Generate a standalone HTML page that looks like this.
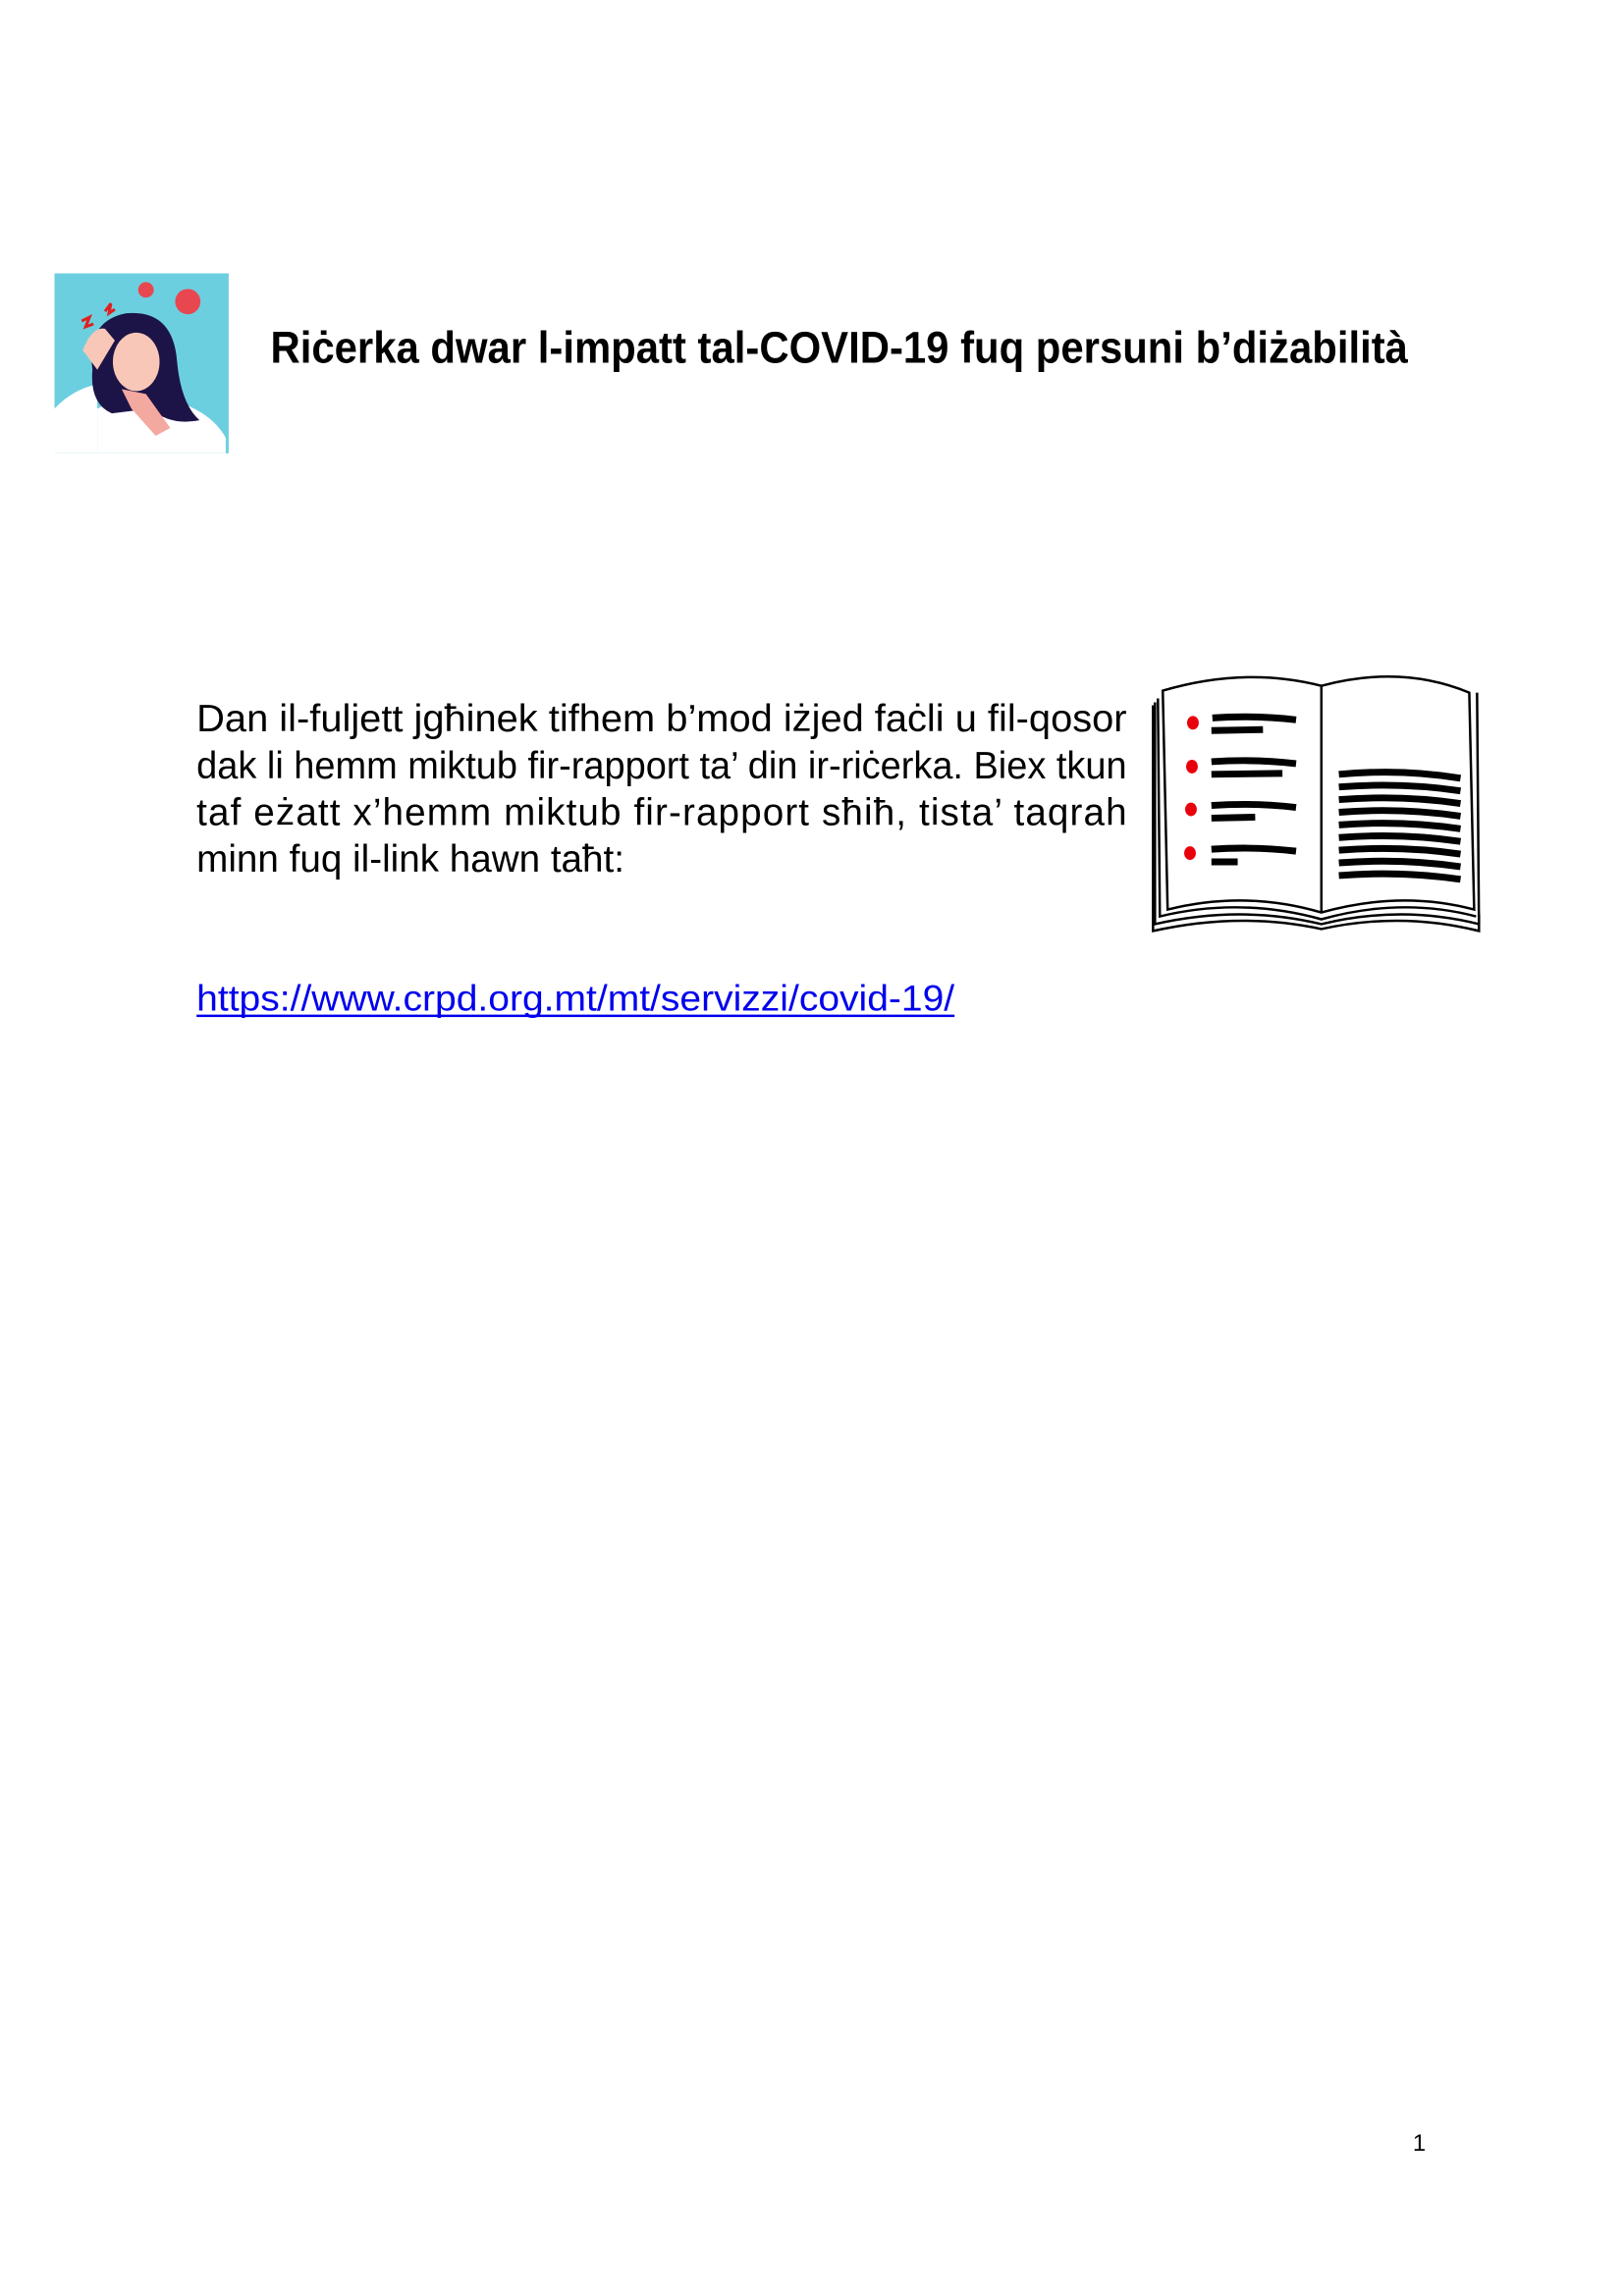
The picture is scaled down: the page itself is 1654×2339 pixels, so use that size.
<!DOCTYPE html>
<html><head><meta charset="utf-8"><style>
html,body{margin:0;padding:0;background:#fff;}
svg{display:block;}
</style></head><body>
<svg width="1654" height="2339" viewBox="0 0 1654 2339" xmlns="http://www.w3.org/2000/svg">
<rect width="1654" height="2339" fill="#fff"/>
<g transform="scale(0.991)">
<!-- illustration -->
<rect x="56" y="281" width="179" height="185" fill="#6ccfe0"/>
<path d="M56 420 Q75 400 100 395 L100 466 L56 466 Z" fill="#fff"/>
<path d="M100 420 Q130 405 170 410 Q215 420 232 450 L232 466 L100 466 Z" fill="#fff"/>
<path d="M95 380 Q88 330 130 322 Q178 318 182 372 Q186 415 205 432 Q175 438 155 420 L115 425 Q92 415 95 380 Z" fill="#1c1446"/>
<ellipse cx="140" cy="372" rx="24" ry="30" fill="#f8c7b8"/>
<path d="M125 400 L150 405 L175 440 L160 448 L135 420 Z" fill="#f4a9a0"/>
<path d="M85 360 Q95 335 108 338 L118 350 L100 380 Z" fill="#f8c7b8"/>
<circle cx="193" cy="310" r="13" fill="#e8474f"/>
<circle cx="150" cy="298" r="8" fill="#e8474f"/>
<path d="M108 320 l6 -8 l-2 10 l6 -4" stroke="#e02020" stroke-width="3" fill="none"/>
<path d="M84 330 l8 -4 l-4 10 l8 -3" stroke="#e02020" stroke-width="3" fill="none"/>
<!-- title -->
<text x="278" y="373" font-family="Liberation Sans, sans-serif" font-weight="bold" font-size="46" textLength="1169" lengthAdjust="spacingAndGlyphs" fill="#000">Riċerka dwar l-impatt tal-COVID-19 fuq persuni b’diżabilità</text>
<!-- paragraph -->
<g font-family="Liberation Sans, sans-serif" font-size="39" fill="#000">
<text x="202" y="752" textLength="956" lengthAdjust="spacingAndGlyphs">Dan il-fuljett jgħinek tifhem b’mod iżjed faċli u fil-qosor</text>
<text x="202" y="800" textLength="956" lengthAdjust="spacingAndGlyphs">dak li hemm miktub fir-rapport ta’ din ir-riċerka. Biex tkun</text>
<text x="202" y="848" textLength="956" lengthAdjust="spacing">taf eżatt x’hemm miktub fir-rapport sħiħ, tista’ taqrah</text>
<text x="202" y="896">minn fuq il-link hawn taħt:</text>
</g>
<text x="202" y="1039" font-family="Liberation Sans, sans-serif" font-size="37.5" fill="#0000ee" textLength="779" lengthAdjust="spacingAndGlyphs">https://www.crpd.org.mt/mt/servizzi/covid-19/</text>
<rect x="202" y="1043" width="779" height="2.5" fill="#0000ee"/>
<!-- book -->
<g fill="none" stroke="#000" stroke-width="2.5">
<path d="M1195 710 Q1280 685 1358 705 Q1440 683 1510 712 L1515 935 Q1440 915 1358 938 Q1280 915 1200 935 Z" fill="#fff"/>
<path d="M1358 705 L1358 938"/>
<path d="M1190 718 L1192 942 Q1275 922 1358 945 Q1440 922 1517 942"/>
<path d="M1187 722 L1187 950 Q1275 930 1358 950 Q1440 930 1520 950 L1520 940"/>
<path d="M1185 725 L1185 957 Q1275 937 1358 955 Q1440 937 1520 957 L1518 712"/>
</g>
<g fill="#e8000b">
<ellipse cx="1226" cy="743" rx="6" ry="7"/>
<ellipse cx="1225" cy="788" rx="6" ry="7"/>
<ellipse cx="1224" cy="832" rx="6" ry="7"/>
<ellipse cx="1223" cy="877" rx="6" ry="7"/>
</g>
<g stroke="#000" stroke-width="7" fill="none">
<path d="M1246 738 Q1290 735 1332 740"/><path d="M1245 751 L1298 750"/>
<path d="M1245 783 Q1290 780 1332 785"/><path d="M1245 796 L1318 795"/>
<path d="M1245 828 Q1290 825 1332 830"/><path d="M1245 841 L1290 840"/>
<path d="M1245 873 Q1290 870 1332 875"/><path d="M1245 886 L1272 886"/>
<path d="M1376 796 Q1440 790 1501 800"/>
<path d="M1376 809 Q1440 804 1501 813"/>
<path d="M1376 822 Q1440 817 1501 826"/>
<path d="M1376 835 Q1440 830 1501 839"/>
<path d="M1376 848 Q1440 843 1501 852"/>
<path d="M1376 861 Q1440 856 1501 865"/>
<path d="M1376 874 Q1440 869 1501 878"/>
<path d="M1376 887 Q1440 882 1501 891"/>
<path d="M1376 900 Q1440 895 1501 904"/>
</g>
<text x="1452" y="2211" font-family="Liberation Sans, sans-serif" font-size="24" fill="#000">1</text>
</g>
</svg>
</body></html>
